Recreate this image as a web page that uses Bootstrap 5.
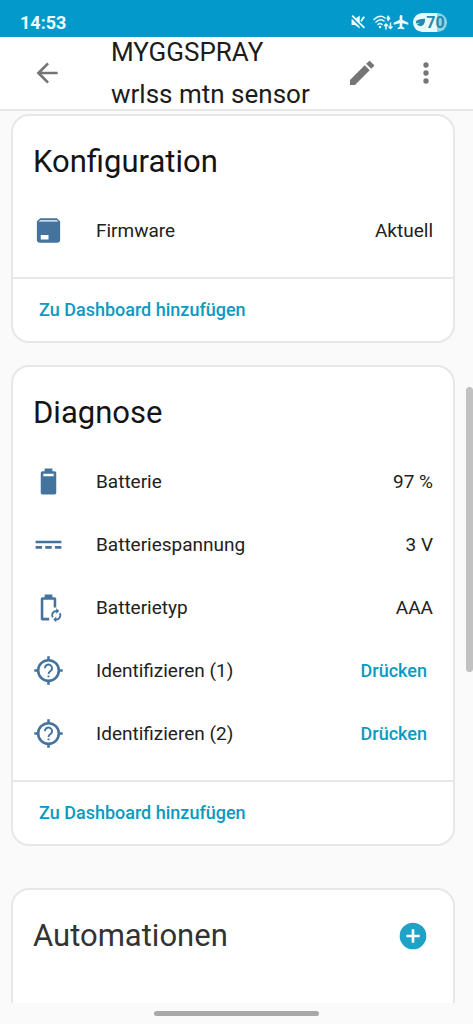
<!DOCTYPE html>
<html lang="de">
<head>
<meta charset="utf-8">
<meta name="viewport" content="width=device-width, initial-scale=1">
<title>MYGGSPRAY wrlss mtn sensor</title>
<link href="https://cdn.jsdelivr.net/npm/bootstrap@5.3.0/dist/css/bootstrap.min.css" rel="stylesheet">
<style>
  :root { --accent: #0a9abf; --state: #44739e; --line: #e7e7e7; }
  body { font-family: Roboto, sans-serif; font-size: 19px; line-height: 24px; color: #212121; background: #fafafa; }
  svg { display: block; fill: currentColor; flex: none; }
  .status-bar { height: 37px; padding: 8px 26px 0 20px; background: #039acb; color: #effcff; font-size: 18px; }
  .status-icons { height: 28px; }
  .battery-pill { width: 34px; height: 19px; background: linear-gradient(90deg, #e6f9fd 70%, #8fd3e8 70%); color: #2588a8; font-size: 16px; line-height: 19px; }
  .app-bar { height: 74px; padding: 0 31px; background: #fff; border-bottom: 2px solid var(--line); color: #757575; }
  .app-title { margin: 0 32px 0 48px; font-size: 26px; line-height: 42px; font-weight: 400; color: #1c1c1c; }
  .tool { padding: 0; border: 0; background: none; color: inherit; }
  .content-area { padding: 3px 18px 0 11px; }
  .panel { --bs-card-border-color: var(--line); --bs-card-border-width: 2px; --bs-card-border-radius: 18px; --bs-card-inner-border-radius: 16px; --bs-card-bg: #fff; --bs-card-color: #212121; flex: none; margin-bottom: 22px; }
  .panel-wide-gap { margin-bottom: 42px; }
  .panel-head { padding: 26px 20px 17px; }
  .panel-title { font-size: 31px; line-height: 40px; font-weight: 400; margin: 0; color: #141414; }
  .panel-title-soft { color: #333; }
  .entity-row { height: 63px; padding: 0 20px; gap: 32px; }
  .entity-row svg { color: var(--state); }
  .panel-footer { height: 64px; padding: 0 20px; border-top: 2px solid var(--line); margin-top: 15px; }
  .text-action { padding: 6px; border: 0; background: none; color: var(--accent); font-size: 18px; font-weight: 500; line-height: 24px; }
  .scroll-thumb { top: 276px; right: 0; width: 7px; height: 285px; border-radius: 4px; background: #c1c1c1; }
  .gesture-area { height: 21px; }
  .gesture-bar { width: 35%; height: 5px; background: #a8a8a8; }
</style>
</head>
<body>
<div class="vh-100 d-flex flex-column overflow-hidden">
  <div class="status-bar d-flex justify-content-between flex-shrink-0">
    <span class="fw-bold mt-1 lh-sm">14:53</span>
    <div class="status-icons d-flex align-items-center">
      <svg width="14" height="14" viewBox="0 0 24 24" class="me-1"><path d="M1 7h6l8-6v22l-8-6H1zM16 10l5-8 3 2-6 8z"/><path d="M1 4l20 20" stroke="#039acb" stroke-width="3"/><path d="M2 1l21 21" stroke="currentColor" stroke-width="3"/></svg>
      <svg width="20" height="16" viewBox="0 0 20 16" class="ms-1"><g fill="none" stroke="currentColor" stroke-width="1.500" stroke-linecap="round"><path d="M1 5.500Q7 0 12 4M3 8q4-4 8-1M5 10.500q2-2 4 0"/><path d="M13 15V10M11.500 11.500l1.500-1.500 1.500 1.500M17.500 9v5.500M16 13l1.500 1.500 1.500-1.500"/></g><circle cx="7" cy="13" r="1.200"/><path d="M15 1l2.500 3.500-2.500 3-1.500-3z"/></svg>
      <svg width="16" height="16" viewBox="0 0 24 24"><path d="M23 16v-3l-9-4.500V3.500a2 2 0 0 0-4 0v5L1 13v3l9-2v5l-3 2v2l5-1 5 1v-2l-3-2v-5z"/></svg>
      <span class="battery-pill rounded-pill d-flex align-items-center justify-content-center ms-1 fw-bold"><svg width="11" height="11" viewBox="0 0 12 12"><path d="M1 5Q3 2 11 2q0 8-5 8-3 0-4-2l4-2-5 1z"/></svg>70</span>
    </div>
  </div>

  <header class="app-bar d-flex align-items-center overflow-hidden flex-shrink-0">
    <button class="tool" type="button" aria-label="Zurück"><svg width="32" height="32" viewBox="0 0 24 24"><path d="M20,11V13H8L13.500,18.500L12.080,19.920L4.160,12L12.080,4.080L13.500,5.500L8,11H20Z"/></svg></button>
    <h1 class="app-title flex-grow-1">MYGGSPRAY wrlss mtn sensor</h1>
    <button class="tool" type="button" aria-label="Bearbeiten"><svg width="32" height="32" viewBox="0 0 24 24"><path d="M20.710,7.040L21.200,6.200L17.800,2.800L16.960,3.290L15.120,5.120L18.870,8.870M3,17.250V21H6.750L17.810,9.930L14.060,6.180L3,17.250Z"/></svg></button>
    <button class="tool ms-4" type="button" aria-label="Menü"><svg width="32" height="32" viewBox="0 0 24 24" class="ms-2"><path d="M12,16A2,2 0 0,1 14,18A2,2 0 0,1 12,20A2,2 0 0,1 10,18A2,2 0 0,1 12,16M12,10A2,2 0 0,1 14,12A2,2 0 0,1 12,14A2,2 0 0,1 10,12A2,2 0 0,1 12,10M12,4A2,2 0 0,1 14,6A2,2 0 0,1 12,8A2,2 0 0,1 10,6A2,2 0 0,1 12,4Z"/></svg></button>
  </header>

  <main class="content-area position-relative flex-grow-1 overflow-hidden d-flex flex-column">
    <section class="card panel">
      <div class="panel-head"><h2 class="panel-title">Konfiguration</h2></div>
      <div class="entity-row d-flex align-items-center">
        <svg width="31" height="31" viewBox="0 0 24 24"><path d="M5.500 2.500h13l2.500 2.500v14a2.500 2.500 0 0 1-2.500 2.500h-13A2.500 2.500 0 0 1 3 19V5z"/><path fill="#fff" d="M5.500 4h13l1 1h-15zM6 15.500h6v3.500H6z"/></svg>
        <span class="flex-grow-1">Firmware</span><span>Aktuell</span>
      </div>
      <div class="panel-footer d-flex align-items-center"><button class="text-action" type="button">Zu Dashboard hinzufügen</button></div>
    </section>

    <section class="card panel panel-wide-gap">
      <div class="panel-head"><h2 class="panel-title">Diagnose</h2></div>
      <div class="entity-row d-flex align-items-center">
        <svg width="31" height="31" viewBox="0 0 24 24"><path d="M16.670,4H15V2H9V4H7.330A1.330,1.330 0 0,0 6,5.330V20.670C6,21.400 6.600,22 7.330,22H16.670A1.330,1.330 0 0,0 18,20.670V5.330C18,4.600 17.400,4 16.670,4M16,8H8V6H16"/></svg>
        <span class="flex-grow-1">Batterie</span><span>97 %</span>
      </div>
      <div class="entity-row d-flex align-items-center">
        <svg width="31" height="31" viewBox="0 0 24 24"><path d="M2 9h20v2H2zM2 13.200h5v2H2zM9.500 13.200h5v2h-5zM17 13.200h5v2h-5z"/></svg>
        <span class="flex-grow-1">Batteriespannung</span><span>3 V</span>
      </div>
      <div class="entity-row d-flex align-items-center">
        <svg width="31" height="31" viewBox="0 0 24 24"><path d="M9 2h6v2h1.700A1.300 1.300 0 0 1 18 5.300V12h-2V6H8v14h4.500v2H7.300A1.300 1.300 0 0 1 6 20.700V5.300A1.300 1.300 0 0 1 7.300 4H9z"/><path d="M18 12.500v1.500a4 4 0 0 0-3.300 6.200l1.100-1.100A2.500 2.500 0 0 1 18 15.500V17l2.300-2.250zM21.300 15.800l-1.100 1.100A2.500 2.500 0 0 1 18 20.500V19l-2.300 2.250L18 23.500V22a4 4 0 0 0 3.300-6.200z"/></svg>
        <span class="flex-grow-1">Batterietyp</span><span>AAA</span>
      </div>
      <div class="entity-row d-flex align-items-center">
        <svg width="31" height="31" viewBox="0 0 24 24"><g fill="none" stroke="currentColor" stroke-width="2"><circle cx="12" cy="12" r="8"/><path d="M12 1v3M12 20v3M1 12h3M20 12h3"/><path stroke-width="1.500" d="M9.250 10.200a2.750 2.750 0 1 1 4.500 2Q12 13.300 12 14.800M12 15.800v1.500"/></g></svg>
        <span class="flex-grow-1">Identifizieren (1)</span><button class="text-action" type="button">Drücken</button>
      </div>
      <div class="entity-row d-flex align-items-center">
        <svg width="31" height="31" viewBox="0 0 24 24"><g fill="none" stroke="currentColor" stroke-width="2"><circle cx="12" cy="12" r="8"/><path d="M12 1v3M12 20v3M1 12h3M20 12h3"/><path stroke-width="1.500" d="M9.250 10.200a2.750 2.750 0 1 1 4.500 2Q12 13.300 12 14.800M12 15.800v1.500"/></g></svg>
        <span class="flex-grow-1">Identifizieren (2)</span><button class="text-action" type="button">Drücken</button>
      </div>
      <div class="panel-footer d-flex align-items-center"><button class="text-action" type="button">Zu Dashboard hinzufügen</button></div>
    </section>

    <section class="card panel">
      <div class="panel-head d-flex align-items-center justify-content-between">
        <h2 class="panel-title panel-title-soft">Automationen</h2>
        <button class="tool me-1" type="button" aria-label="Automation hinzufügen"><svg width="32" height="32" viewBox="0 0 24 24"><circle cx="12" cy="12" r="10" fill="#1fa2c6"/><path fill="#fff" d="M11 7h2v4h4v2h-4v4h-2v-4H7v-2h4z"/></svg></button>
      </div>
      <div class="entity-row"></div>
    </section>
    <div class="scroll-thumb position-absolute"></div>
  </main>

  <div class="gesture-area d-flex align-items-center justify-content-center flex-shrink-0"><div class="gesture-bar rounded-pill"></div></div>
</div>
<script src="https://cdn.jsdelivr.net/npm/bootstrap@5.3.0/dist/js/bootstrap.bundle.min.js"></script>
</body>
</html>
